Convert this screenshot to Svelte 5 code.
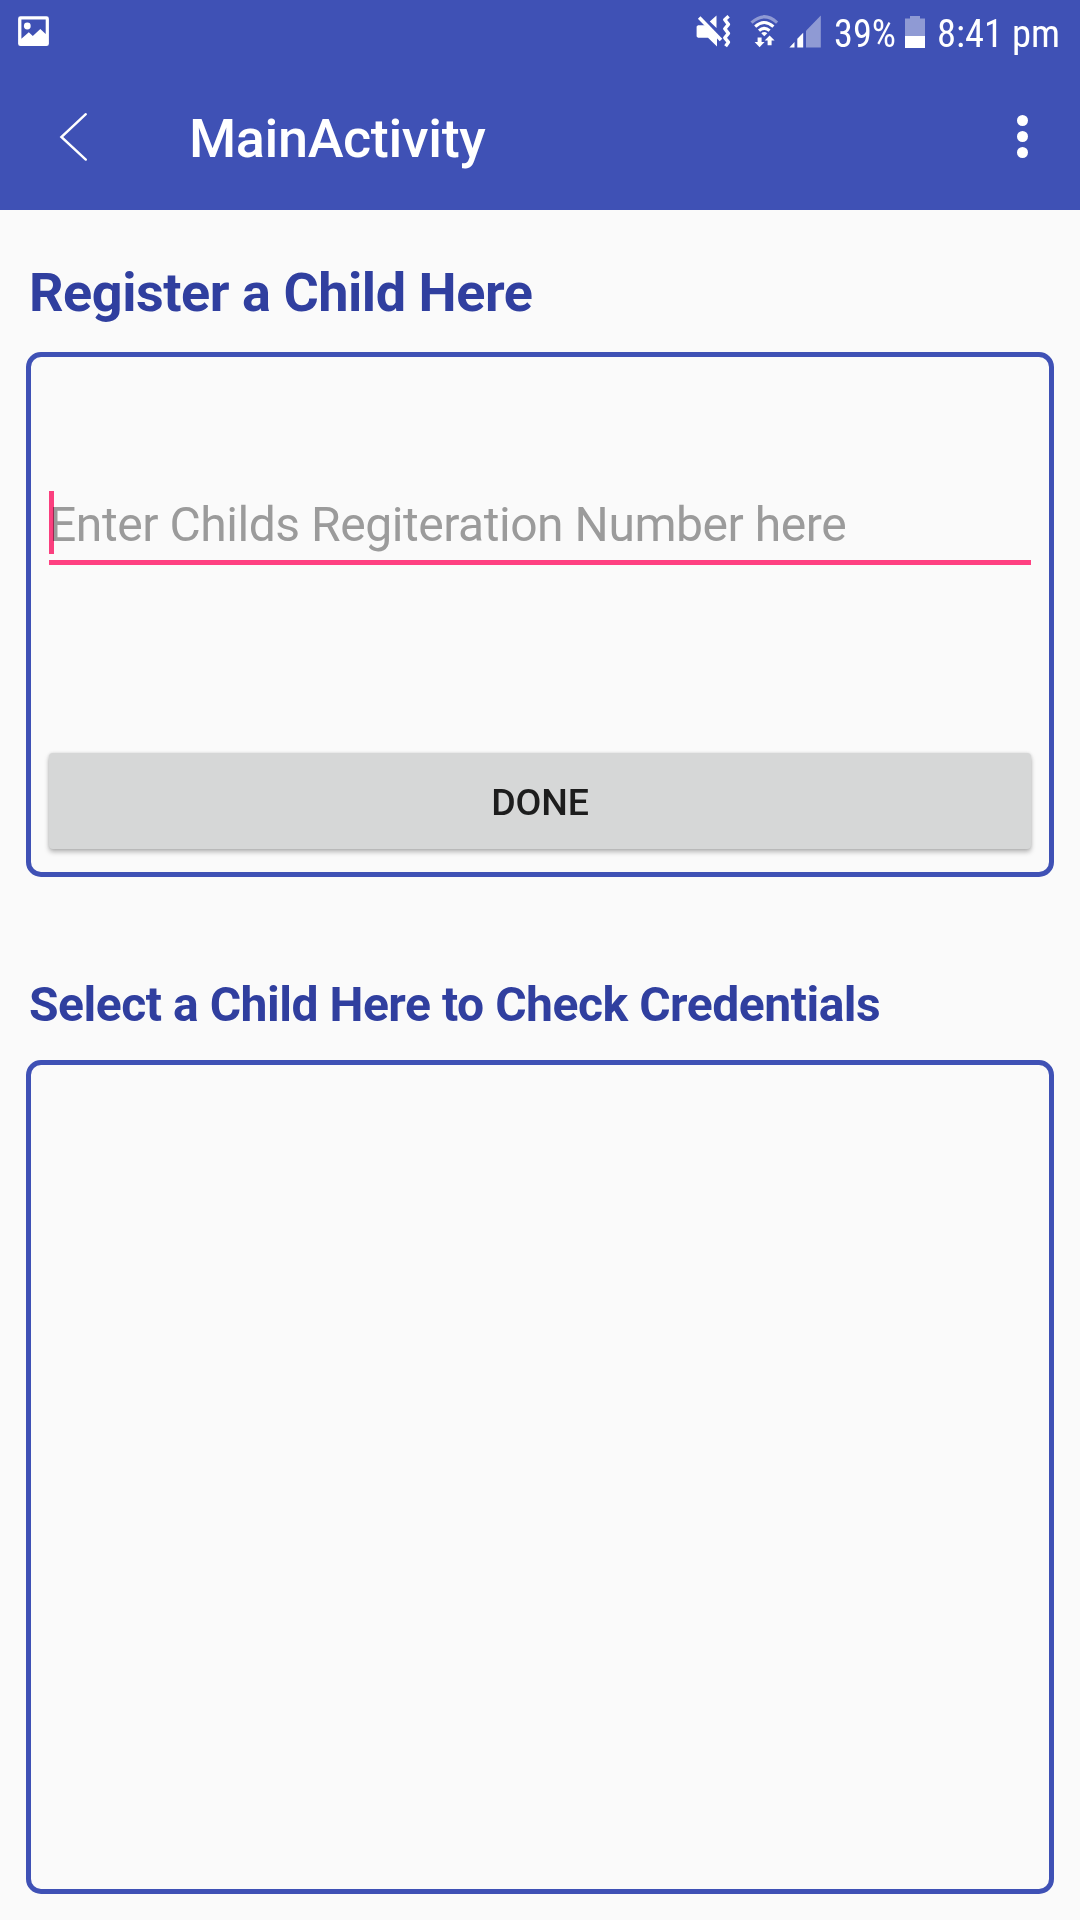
<script>
  let registration = $state('');
</script>

<div class="screen">
  <header>
    <div class="status">
      <svg class="photo" width="31" height="31" viewBox="0 0 31 31">
        <path fill="#fff" fill-rule="evenodd" d="M2.5 0.3h26a2.4 2.4 0 0 1 2.4 2.4v25a2.4 2.4 0 0 1-2.4 2.4h-26a2.4 2.4 0 0 1-2.4-2.4v-25a2.4 2.4 0 0 1 2.4-2.4zM3.4 3.4V22.8L10.8 16.2L14.8 20L22.3 13L27.7 18V3.4z" />
        <circle cx="9.3" cy="10" r="3.4" fill="#fff" />
      </svg>
      <svg class="mute" width="36" height="34" viewBox="0 0 36 34">
        <path fill="#fff" d="M2 10.2H9L21 22V31.5L12 22.8H2L0.6 21.4V11.6zM13.8 6.5L20.5 0.5V13z" />
        <path fill="none" stroke="#fff" stroke-width="3.6" d="M3.2 2.6L25 25" />
        <path fill="none" stroke="#fff" stroke-width="3.4" stroke-linejoin="round" d="M32.6 1.2L28.8 4.8L32.4 9.4L28.8 13.8L32.4 18.4L28.8 22.8L32.4 27.2L29.6 31.2" />
      </svg>
      <svg class="wifi" width="28" height="34" viewBox="0 0 28 34">
        <g fill="none" stroke="#fff" stroke-width="3.1">
          <path stroke-opacity=".42" d="M1.5 7.7Q14.3-4.2 27.1 7.7" />
          <path d="M5.2 11.6Q14.3 3.4 23.4 11.6" />
          <path d="M9 15.6Q14.3 11 19.6 15.6" />
        </g>
        <g fill="#fff">
          <path d="M11.3 18.2Q14.3 16 17.3 18.2L14.3 21.3z" />
          <path d="M7.6 22.4h4v4.6h3L9.6 32.2L4.6 27h3z" />
          <path d="M17.6 30.2h4v-4.6h3L19.6 20.4L14.6 25.6h3z" />
        </g>
      </svg>
      <svg class="signal" width="33" height="33" viewBox="0 0 33 33">
        <path fill="#fff" fill-opacity=".42" d="M17 15.8L31.8 0.6V32.6H17z" />
        <path fill="#fff" d="M0.4 32.4L5.5 27V32.4zM8.3 23.8L14.2 17.8V32.4H8.3z" />
      </svg>
      <svg class="percent" width="64" height="60" viewBox="0 0 64 60">
        <text x="0" y="47" textLength="62" lengthAdjust="spacingAndGlyphs">39%</text>
      </svg>
      <svg class="battery" width="20" height="33" viewBox="0 0 20 33">
        <path fill="#fff" fill-opacity=".42" d="M0 2.5h5V0h10v2.5h5V20H0z" />
        <path fill="#fff" d="M0 20h20v12H0z" />
      </svg>
      <svg class="clock" width="126" height="60" viewBox="0 0 126 60">
        <text x="0" y="47" textLength="123" lengthAdjust="spacingAndGlyphs">8:41 pm</text>
      </svg>
    </div>
    <div class="toolbar">
      <svg class="back" width="30" height="50" viewBox="0 0 30 50">
        <path fill="none" stroke="#fff" stroke-width="2.4" stroke-linecap="round" d="M26.8 2.2L2.4 25L26.8 47.6" />
      </svg>
      <h1>MainActivity</h1>
      <div class="more"><i></i><i></i><i></i></div>
    </div>
  </header>

  <main>
    <h2 class="register">Register a Child Here</h2>
    <section class="card form">
      <div class="field">
        <input type="text" placeholder="Enter Childs Regiteration Number here" bind:value={registration} />
        <span class="caret"></span>
      </div>
      <button>DONE</button>
    </section>
    <h2 class="select">Select a Child Here to Check Credentials</h2>
    <section class="card list"></section>
  </main>
</div>

<style>
  :global(body) {
    background: #fafafa;
  }
  * {
    box-sizing: border-box;
  }
  svg {
    display: block;
    flex: none;
  }
  .screen {
    width: 1080px;
    height: 1920px;
    overflow: hidden;
    background: #fafafa;
    font-family: Roboto, sans-serif;
  }
  header {
    height: 210px;
    background: #3f51b5;
    color: #fff;
  }
  .status {
    display: flex;
    align-items: flex-start;
    height: 72px;
    padding-left: 18px;
  }
  .status text {
    font-family: 'Roboto Condensed', Roboto, sans-serif;
    font-size: 39.5px;
    fill: #fff;
  }
  .photo { margin-top: 16px; }
  .mute { margin: 15px 0 0 647px; }
  .wifi { margin: 15px 0 0 18px; }
  .signal { margin: 15px 0 0 11px; }
  .percent { margin-left: 12px; }
  .battery { margin: 16px 0 0 7px; }
  .clock { margin-left: 12px; }
  .toolbar {
    display: flex;
    align-items: center;
    height: 130px;
    padding: 0 52px 0 59px;
  }
  h1 {
    flex: 1;
    margin: 4px 0 0 100px;
    font-size: 54px;
    line-height: 62px;
    font-weight: 500;
    letter-spacing: -0.38px;
  }
  .more {
    display: flex;
    flex-direction: column;
    gap: 5px;
    margin-bottom: 1px;
  }
  .more i {
    width: 11px;
    height: 11px;
    border-radius: 50%;
    background: #fff;
  }
  main {
    padding: 0 26px;
  }
  h2 {
    margin: 0;
    padding-left: 3px;
    color: #303f9f;
    font-weight: 700;
    letter-spacing: -0.47px;
    white-space: nowrap;
  }
  .register {
    height: 142px;
    padding-top: 51px;
    font-size: 54px;
    line-height: 64px;
  }
  .select {
    height: 183px;
    padding-top: 100px;
    font-size: 48px;
    line-height: 56px;
  }
  .card {
    border: 5px solid #3f51b5;
    border-radius: 15px;
  }
  .form {
    display: flex;
    flex-direction: column;
    justify-content: space-between;
    height: 525px;
    padding: 134px 18px 23px;
  }
  .field {
    position: relative;
    height: 74px;
    border-bottom: 5px solid #ff4081;
  }
  input {
    display: block;
    width: 100%;
    height: 68px;
    padding: 0;
    border: 0;
    outline: 0;
    background: none;
    font: 400 48px/68px Roboto, sans-serif;
    letter-spacing: -0.45px;
  }
  input::placeholder {
    color: #9b9b9b;
    opacity: 1;
  }
  .caret {
    position: absolute;
    left: 0;
    top: 0;
    width: 5px;
    height: 63px;
    background: #ff4081;
    mix-blend-mode: multiply;
  }
  button {
    height: 96px;
    padding: 1px 0 0;
    border: 0;
    border-radius: 4px;
    background: #d6d7d7;
    box-shadow: 0 3px 5px rgba(0, 0, 0, 0.27), 0 0 3px rgba(0, 0, 0, 0.12);
    color: #1d1d1d;
    font: 500 37.5px/97px Roboto, sans-serif;
    letter-spacing: -0.2px;
  }
  .list {
    height: 834px;
  }
</style>
